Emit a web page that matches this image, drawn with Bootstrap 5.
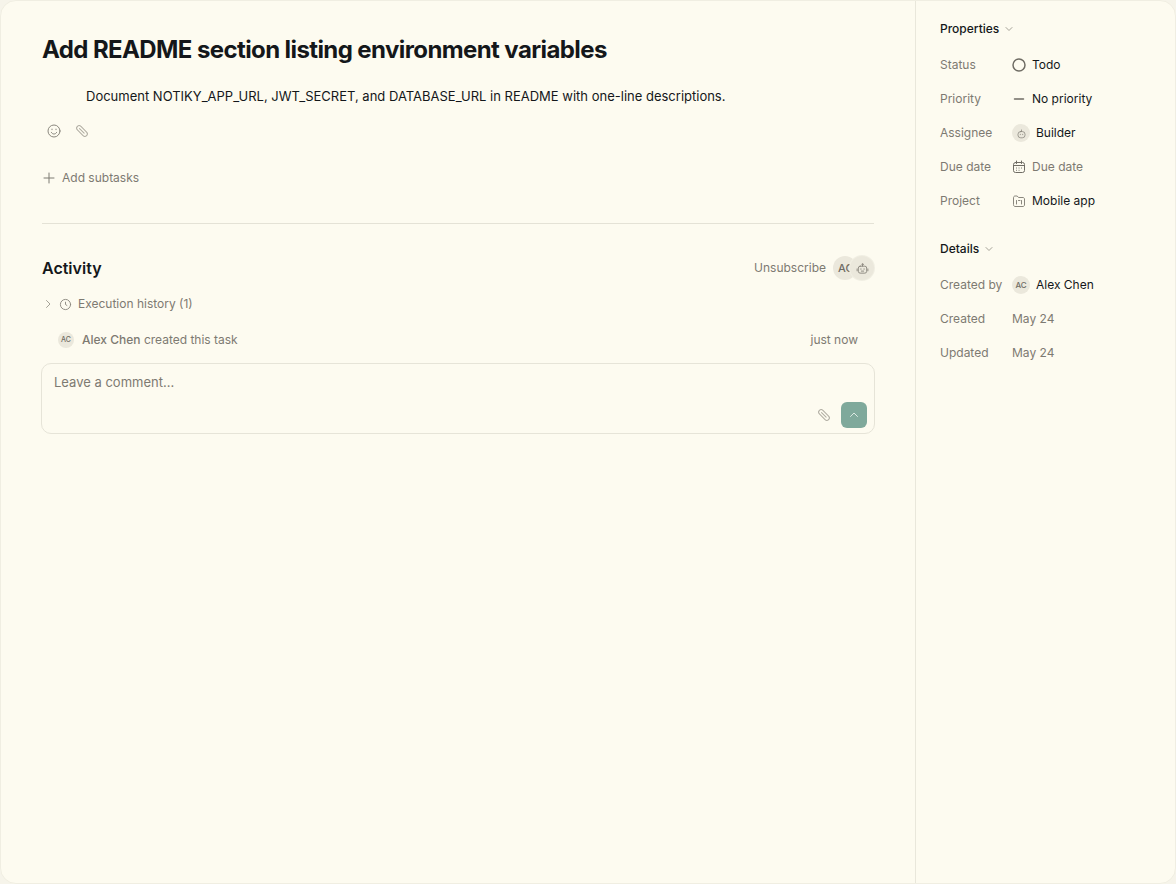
<!DOCTYPE html>
<html lang="en">
  <head>
    <meta charset="UTF-8" />
    <meta name="viewport" content="width=device-width, initial-scale=1.0" />
    <title>Add README section listing environment variables</title>
    <link href="https://cdn.jsdelivr.net/npm/bootstrap@5.3.0/dist/css/bootstrap.min.css" rel="stylesheet" crossorigin="anonymous" />
    <style>
      html, body {
        height: 100%;
      }
      body {
        background: #f6f4ea;
        font-family: Inter, "Liberation Sans", sans-serif;
        font-size: 12px;
        color: #7d7a72;
        overflow: hidden;
      }
      svg {
        display: block;
        flex: none;
        fill: none;
        stroke: currentColor;
        stroke-linecap: round;
        stroke-linejoin: round;
      }
      .shell {
        height: 884px;
        background: #fdfbf0;
        border: 1px solid #f0eee2;
        border-radius: 16px;
        overflow: hidden;
      }
      .main-col {
        width: 914px;
        padding: 0 40px 0 41px;
      }
      .side-col {
        width: 260px;
        border-left: 1px solid #e9e7db;
        padding: 18px 0 0 24px;
      }
      .task-title {
        font-size: 24px;
        font-weight: 700;
        line-height: 32px;
        letter-spacing: -0.6px;
        color: #14171a;
        margin: 33px 0 0;
      }
      .task-desc {
        font-size: 13px;
        line-height: 20px;
        color: #14171a;
        margin: 20px 0 0 44px;
      }
      .tool-row {
        height: 18px;
        margin: 16px 0 0 4px;
        gap: 12px;
        color: #8a877e;
      }
      .clip-icon {
        color: #b0ada2;
      }
      .add-subtasks {
        height: 20px;
        margin-top: 28px;
        gap: 6px;
      }
      .divider {
        border-top: 1px solid #e4e2d6;
        margin: 35px 0 0;
        width: 832px;
        opacity: 1;
      }
      .activity-head {
        width: 832px;
        height: 32px;
        margin-top: 28px;
      }
      .activity-head h2 {
        font-size: 16px;
        font-weight: 600;
        color: #14171a;
        margin: 2px 0 0;
      }
      .stack-avatar {
        width: 24px;
        height: 24px;
        font-size: 11px;
        font-weight: 500;
        overflow: hidden;
      }
      .stack-avatar.initials {
        padding-left: 5px;
      }
      .stack-avatar + .stack-avatar {
        margin-left: -7px;
        box-shadow: 0 0 0 1px #f1efe3;
        color: #8a877e;
      }
      .avatar {
        background: #ebe8dc;
        color: #6f6c64;
        border-radius: 50%;
      }
      .avatar-sm {
        width: 16px;
        height: 16px;
        font-size: 7px;
        font-weight: 500;
      }
      .avatar-md {
        width: 18px;
        height: 18px;
        font-size: 8px;
        font-weight: 500;
      }
      .avatar-md svg {
        color: #8a877e;
      }
      .unsub-gap {
        gap: 7px;
      }
      .history-row {
        height: 20px;
        margin-top: 10px;
        padding-left: 1px;
        gap: 6px;
      }
      .history-row .chevron {
        color: #a5a297;
      }
      .history-row .clock {
        color: #8a877e;
      }
      .created-row {
        height: 20px;
        margin-top: 16px;
        padding: 0 16px 0 16px;
        width: 832px;
      }
      .created-row b {
        font-weight: 500;
      }
      .comment-box {
        width: 834px;
        height: 71px;
        margin: 13px 0 0 -1px;
        border: 1px solid #e6e4d8;
        border-radius: 10px;
        padding: 9px 7px 0 12px;
      }
      .comment-box textarea {
        display: block;
        width: 100%;
        height: 24px;
        padding: 0;
        border: 0;
        outline: 0;
        resize: none;
        background: transparent;
        font-size: 13px;
        line-height: 18px;
        color: #14171a;
      }
      .comment-box textarea::placeholder {
        color: #7d7a72;
        opacity: 1;
      }
      .comment-tools {
        gap: 9px;
        margin-top: 5px;
      }
      .send-btn {
        width: 26px;
        height: 26px;
        padding: 0;
        border: 0;
        border-radius: 6px;
        background: #7fa99b;
        color: #dce9e2;
      }
      .section-head {
        height: 20px;
        gap: 5px;
        color: #14171a;
        font-weight: 500;
      }
      .section-head svg {
        color: #a5a297;
      }
      .prop-list {
        margin: 9px 0 21px;
      }
      .prop-row {
        height: 34px;
      }
      .prop-label {
        width: 72px;
      }
      .prop-value {
        gap: 6px;
        color: #14171a;
      }
      .prop-value.muted {
        color: #7d7a72;
      }
      .glyph-dark {
        color: #6f6c64;
      }
      .glyph-soft {
        color: #8a877e;
      }
    </style>
  </head>
  <body>
    <div class="shell d-flex">
      <div class="main-col flex-shrink-0">
        <h1 class="task-title">Add README section listing environment variables</h1>
        <p class="task-desc">Document NOTIKY_APP_URL, JWT_SECRET, and DATABASE_URL in README with one-line descriptions.</p>

        <div class="tool-row d-flex align-items-center">
          <svg width="16" height="16" viewBox="0 0 16 16" stroke-width="1"><circle cx="8" cy="8" r="6" /><path d="M5.300 9.300c.6 1.100 1.500 1.700 2.700 1.700s2.100-.6 2.700-1.700M6 6.100v.6M10 6.100v.6" /></svg>
          <svg class="clip-icon" width="16" height="16" viewBox="0 0 16 16" stroke-width="1"><g transform="rotate(45 8 8)"><rect x="1.500" y="5.500" width="13" height="5" rx="2.500" /><path d="M4.500 8h6.500" /></g></svg>
        </div>

        <div class="add-subtasks d-flex align-items-center">
          <svg width="14" height="14" viewBox="0 0 14 14" stroke-width="1"><path d="M7 2v10M2 7h10" /></svg>
          <span>Add subtasks</span>
        </div>

        <hr class="divider" />

        <div class="activity-head d-flex align-items-center justify-content-between">
          <h2>Activity</h2>
          <div class="d-flex align-items-center unsub-gap">
            <span>Unsubscribe</span>
            <div class="d-flex">
              <span class="avatar stack-avatar initials d-flex align-items-center justify-content-start">AC</span>
              <span class="avatar stack-avatar d-flex align-items-center justify-content-center">
                <svg width="13" height="13" viewBox="0 0 14 14" stroke-width="1"><rect x="2.500" y="4.500" width="9" height="7.500" rx="2" /><circle cx="7" cy="2.500" r=".7" /><path d="M7 3.200v1.300M1.200 7.500v2M12.800 7.500v2M5.300 7.300v.6M8.700 7.300v.6M5.800 9.800h2.400" /></svg>
              </span>
            </div>
          </div>
        </div>

        <div class="history-row d-flex align-items-center">
          <svg class="chevron" width="10" height="10" viewBox="0 0 10 10" stroke-width="1"><path d="M3.500 1.500 7 5 3.500 8.500" /></svg>
          <svg class="clock" width="13" height="13" viewBox="0 0 14 14" stroke-width="1"><circle cx="7" cy="7" r="5.500" /><path d="M7 4.500V7l1.500 1" /></svg>
          <span>Execution history (1)</span>
        </div>

        <div class="created-row d-flex align-items-center justify-content-between">
          <div class="d-flex align-items-center gap-2">
            <span class="avatar avatar-sm d-flex align-items-center justify-content-center">AC</span>
            <span><b>Alex Chen</b> created this task</span>
          </div>
          <span>just now</span>
        </div>

        <div class="comment-box">
          <textarea rows="1" placeholder="Leave a comment..."></textarea>
          <div class="comment-tools d-flex align-items-center justify-content-end">
            <svg class="clip-icon" width="16" height="16" viewBox="0 0 16 16" stroke-width="1"><g transform="rotate(45 8 8)"><rect x="1.500" y="5.500" width="13" height="5" rx="2.500" /><path d="M4.500 8h6.500" /></g></svg>
            <button type="button" class="send-btn btn d-flex align-items-center justify-content-center" aria-label="Send">
              <svg width="12" height="12" viewBox="0 0 12 12" stroke-width="1"><path d="M2.500 7.500 6 4l3.500 3.500" /></svg>
            </button>
          </div>
        </div>
      </div>

      <aside class="side-col flex-grow-1">
        <div class="section-head d-flex align-items-center">
          <span>Properties</span>
          <svg width="10" height="10" viewBox="0 0 10 10" stroke-width="1"><path d="M2 3.500 5 6.500 8 3.500" /></svg>
        </div>
        <div class="prop-list">
          <div class="prop-row d-flex align-items-center">
            <span class="prop-label">Status</span>
            <span class="prop-value d-flex align-items-center">
              <svg class="glyph-dark" width="14" height="14" viewBox="0 0 14 14" stroke-width="1.500"><circle cx="7" cy="7" r="6" /></svg>
              Todo
            </span>
          </div>
          <div class="prop-row d-flex align-items-center">
            <span class="prop-label">Priority</span>
            <span class="prop-value d-flex align-items-center">
              <svg class="glyph-dark" width="14" height="14" viewBox="0 0 14 14" stroke-width="1.500"><path d="M2.500 7h9" /></svg>
              No priority
            </span>
          </div>
          <div class="prop-row d-flex align-items-center">
            <span class="prop-label">Assignee</span>
            <span class="prop-value d-flex align-items-center">
              <span class="avatar avatar-md d-flex align-items-center justify-content-center">
                <svg width="11" height="11" viewBox="0 0 14 14" stroke-width="1"><rect x="2.500" y="4.500" width="9" height="8" rx="3.500" /><path d="M7 4.500V2.500M5.500 8v.5M8.500 8v.5" /></svg>
              </span>
              Builder
            </span>
          </div>
          <div class="prop-row d-flex align-items-center">
            <span class="prop-label">Due date</span>
            <span class="prop-value muted d-flex align-items-center">
              <svg class="glyph-dark" width="14" height="14" viewBox="0 0 14 14" stroke-width="1"><rect x="1.500" y="2.500" width="11" height="10" rx="2" /><path d="M1.500 5.500h11M4.500 1v2.500M9.500 1v2.500M4.500 8h.1M7 8h.1M9.500 8h.1M4.500 10.300h.1M7 10.300h.1" /></svg>
              Due date
            </span>
          </div>
          <div class="prop-row d-flex align-items-center">
            <span class="prop-label">Project</span>
            <span class="prop-value d-flex align-items-center">
              <svg class="glyph-soft" width="14" height="14" viewBox="0 0 14 14" stroke-width="1"><path d="M1.500 3.500c0-.8.700-1.500 1.500-1.500h2.200L6.500 3.500H11c.8 0 1.500.7 1.500 1.500v6c0 .8-.7 1.500-1.500 1.500H3c-.8 0-1.500-.7-1.500-1.500Z" /><path d="M4.500 6.500v3.500M6.500 6.500h1.500M9.500 6.500v3.500" /></svg>
              Mobile app
            </span>
          </div>
        </div>

        <div class="section-head d-flex align-items-center">
          <span>Details</span>
          <svg width="10" height="10" viewBox="0 0 10 10" stroke-width="1"><path d="M2 3.500 5 6.500 8 3.500" /></svg>
        </div>
        <div class="prop-list">
          <div class="prop-row d-flex align-items-center">
            <span class="prop-label">Created by</span>
            <span class="prop-value d-flex align-items-center">
              <span class="avatar avatar-md d-flex align-items-center justify-content-center">AC</span>
              Alex Chen
            </span>
          </div>
          <div class="prop-row d-flex align-items-center">
            <span class="prop-label">Created</span>
            <span class="prop-value muted">May 24</span>
          </div>
          <div class="prop-row d-flex align-items-center">
            <span class="prop-label">Updated</span>
            <span class="prop-value muted">May 24</span>
          </div>
        </div>
      </aside>
    </div>

    <script src="https://cdn.jsdelivr.net/npm/bootstrap@5.3.0/dist/js/bootstrap.bundle.min.js" crossorigin="anonymous"></script>
  </body>
</html>
